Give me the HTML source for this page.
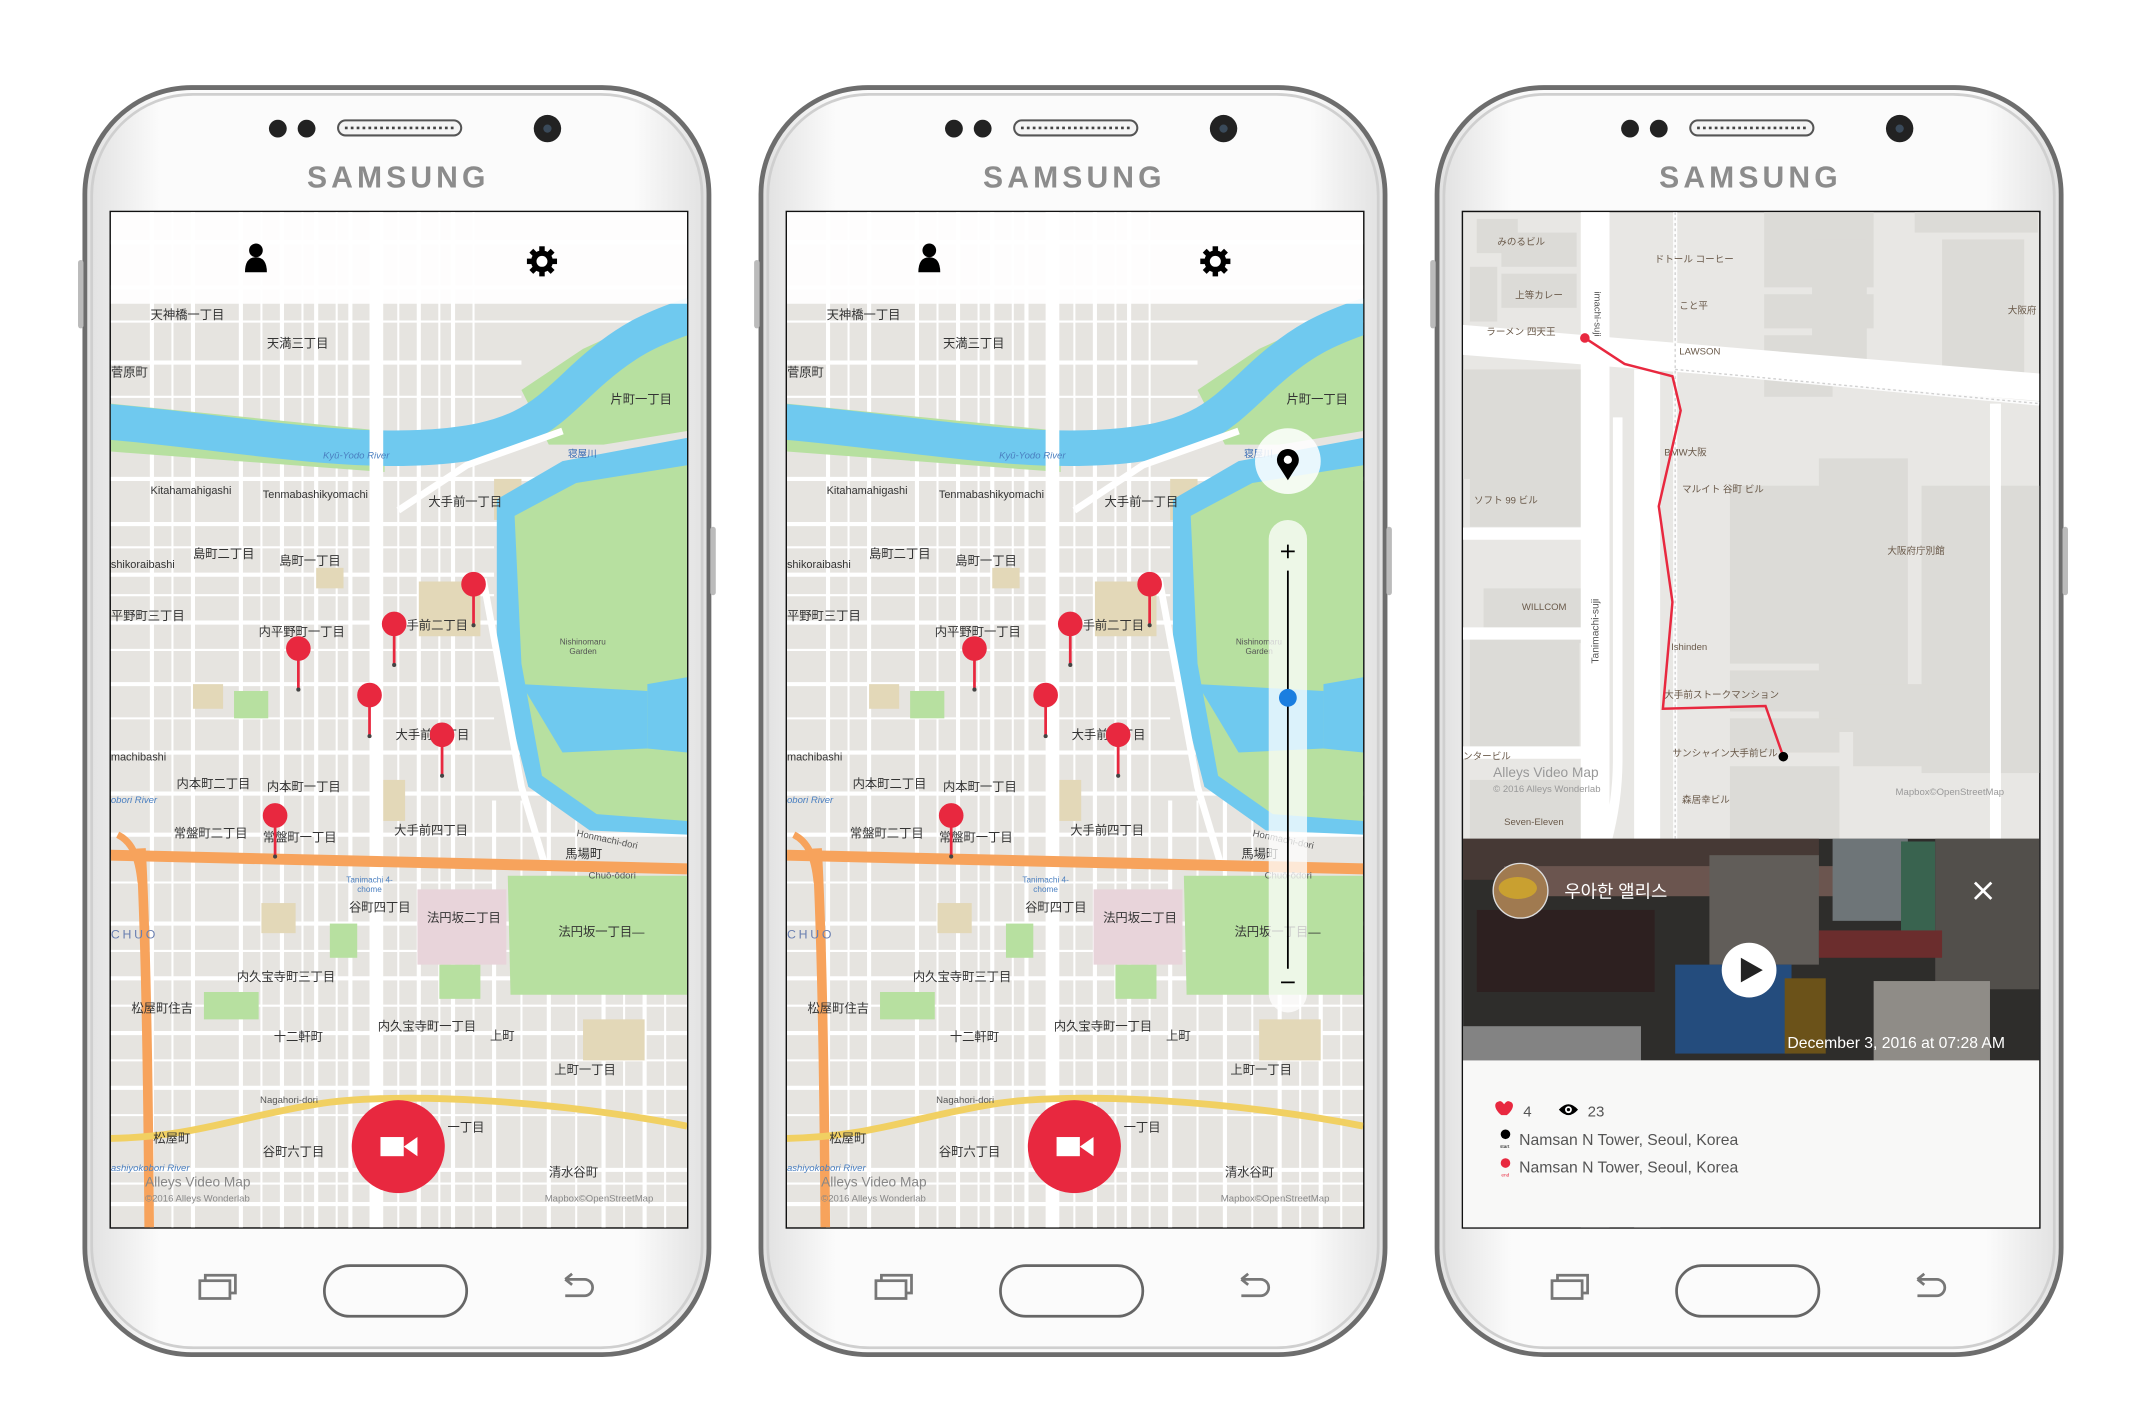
<!DOCTYPE html>
<html><head><meta charset="utf-8"><style>
html,body{margin:0;padding:0;background:#fff;width:2146px;height:1423px;overflow:hidden}
svg{display:block}
text{font-family:"Liberation Sans","Noto Sans CJK JP",sans-serif}
.l{font-size:9px;fill:#333}
</style></head><body>
<svg width="2146" height="1423" viewBox="0 0 1568 1040" preserveAspectRatio="none" xmlns="http://www.w3.org/2000/svg">
<defs>
<linearGradient id="bd" x1="0" y1="0" x2="1" y2="0">
<stop offset="0" stop-color="#e0e0e0"/><stop offset=".12" stop-color="#fbfbfb"/><stop offset=".88" stop-color="#fbfbfb"/><stop offset="1" stop-color="#e0e0e0"/></linearGradient>
<clipPath id="sc"><rect x="0" y="0" width="421" height="742"/></clipPath>
</defs>

<g>
<rect x="62" y="64" width="456" height="926" rx="78" fill="url(#bd)" stroke="#6d6d6d" stroke-width="3.5"/>
<rect x="67" y="69" width="446" height="916" rx="74" fill="none" stroke="#cfcfcf" stroke-width="2"/>
<rect x="57" y="190" width="4" height="50" rx="2" fill="#bbb"/>
<rect x="519" y="385" width="4" height="50" rx="2" fill="#bbb"/>
<circle cx="203" cy="94" r="6.5" fill="#222"/><circle cx="224" cy="94" r="6.5" fill="#222"/>
<rect x="247" y="88" width="90" height="11" rx="5.5" fill="#f4f4f4" stroke="#555" stroke-width="1.5"/>
<line x1="252" y1="93.5" x2="332" y2="93.5" stroke="#444" stroke-width="2" stroke-dasharray="2 2.3"/>
<circle cx="400" cy="94" r="10" fill="#222"/><circle cx="400" cy="94" r="3" fill="#3a4a5a"/>
<text x="291" y="137" text-anchor="middle" font-size="22" font-weight="bold" letter-spacing="3" fill="#8c8c8c">SAMSUNG</text>
<rect x="80" y="154" width="423" height="744" fill="#111"/>
<rect x="146" y="936" width="22" height="13" fill="none" stroke="#777" stroke-width="2"/>
<path d="M150 936 v-4 h22 v13 h-4" fill="none" stroke="#777" stroke-width="2"/>
<rect x="237" y="925" width="104" height="37" rx="18.5" fill="#fbfbfb" stroke="#666" stroke-width="2"/>
<path d="M413 935 h14 a6 6 0 0 1 0 12 h-14 M413 935 l5 -4 M413 935 l5 4" fill="none" stroke="#777" stroke-width="2"/>
</g>
<g transform="translate(494,0)">
<rect x="62" y="64" width="456" height="926" rx="78" fill="url(#bd)" stroke="#6d6d6d" stroke-width="3.5"/>
<rect x="67" y="69" width="446" height="916" rx="74" fill="none" stroke="#cfcfcf" stroke-width="2"/>
<rect x="57" y="190" width="4" height="50" rx="2" fill="#bbb"/>
<rect x="519" y="385" width="4" height="50" rx="2" fill="#bbb"/>
<circle cx="203" cy="94" r="6.5" fill="#222"/><circle cx="224" cy="94" r="6.5" fill="#222"/>
<rect x="247" y="88" width="90" height="11" rx="5.5" fill="#f4f4f4" stroke="#555" stroke-width="1.5"/>
<line x1="252" y1="93.5" x2="332" y2="93.5" stroke="#444" stroke-width="2" stroke-dasharray="2 2.3"/>
<circle cx="400" cy="94" r="10" fill="#222"/><circle cx="400" cy="94" r="3" fill="#3a4a5a"/>
<text x="291" y="137" text-anchor="middle" font-size="22" font-weight="bold" letter-spacing="3" fill="#8c8c8c">SAMSUNG</text>
<rect x="80" y="154" width="423" height="744" fill="#111"/>
<rect x="146" y="936" width="22" height="13" fill="none" stroke="#777" stroke-width="2"/>
<path d="M150 936 v-4 h22 v13 h-4" fill="none" stroke="#777" stroke-width="2"/>
<rect x="237" y="925" width="104" height="37" rx="18.5" fill="#fbfbfb" stroke="#666" stroke-width="2"/>
<path d="M413 935 h14 a6 6 0 0 1 0 12 h-14 M413 935 l5 -4 M413 935 l5 4" fill="none" stroke="#777" stroke-width="2"/>
</g>
<g transform="translate(988,0)">
<rect x="62" y="64" width="456" height="926" rx="78" fill="url(#bd)" stroke="#6d6d6d" stroke-width="3.5"/>
<rect x="67" y="69" width="446" height="916" rx="74" fill="none" stroke="#cfcfcf" stroke-width="2"/>
<rect x="57" y="190" width="4" height="50" rx="2" fill="#bbb"/>
<rect x="519" y="385" width="4" height="50" rx="2" fill="#bbb"/>
<circle cx="203" cy="94" r="6.5" fill="#222"/><circle cx="224" cy="94" r="6.5" fill="#222"/>
<rect x="247" y="88" width="90" height="11" rx="5.5" fill="#f4f4f4" stroke="#555" stroke-width="1.5"/>
<line x1="252" y1="93.5" x2="332" y2="93.5" stroke="#444" stroke-width="2" stroke-dasharray="2 2.3"/>
<circle cx="400" cy="94" r="10" fill="#222"/><circle cx="400" cy="94" r="3" fill="#3a4a5a"/>
<text x="291" y="137" text-anchor="middle" font-size="22" font-weight="bold" letter-spacing="3" fill="#8c8c8c">SAMSUNG</text>
<rect x="80" y="154" width="423" height="744" fill="#111"/>
<rect x="146" y="936" width="22" height="13" fill="none" stroke="#777" stroke-width="2"/>
<path d="M150 936 v-4 h22 v13 h-4" fill="none" stroke="#777" stroke-width="2"/>
<rect x="237" y="925" width="104" height="37" rx="18.5" fill="#fbfbfb" stroke="#666" stroke-width="2"/>
<path d="M413 935 h14 a6 6 0 0 1 0 12 h-14 M413 935 l5 -4 M413 935 l5 4" fill="none" stroke="#777" stroke-width="2"/>
</g>

<!-- ========== SCREEN 1 ========== -->
<g transform="translate(81,155)" clip-path="url(#sc)">
<rect width="421" height="742" fill="#e6e4e0"/>
<g stroke="#fff" stroke-width="3" fill="none">
<path d="M0 22H421M0 55H421M0 110H300M0 195H421M0 228H300M0 265H280M0 300H290M0 345H300M0 395H300M0 425H421M0 455H421M0 520H421M0 560H421M0 600H421M0 640H421M0 700H421M0 725H421"/>
<path d="M30 0V742M60 0V742M95 0V742M125 0V742M150 0V742M175 0V742M225 0V742M250 0V742M280 430V742M320 430V742M360 560V742M390 560V742"/>
</g>
<g stroke="#fff" stroke-width="1.5"><path d="M0 80H421M0 135H300M0 245H280M0 280H280M0 320H280M0 370H280M0 490H280M0 540H421M0 580H421M0 620H421M0 660H421M0 710H421M45 0V742M110 0V742M140 0V742M165 0V742M210 0V742M240 0V742M265 0V742M300 430V742M340 430V742M375 560V742M405 560V742"/></g>
<rect x="60" y="345" width="22" height="18" fill="#e3d8b8"/><rect x="150" y="260" width="20" height="15" fill="#e3d8b8"/>
<rect x="90" y="350" width="25" height="20" fill="#b7e0a0"/><rect x="90" y="170" width="30" height="12" fill="#b7e0a0"/>
<rect x="225" y="270" width="45" height="40" fill="#e3d8b8"/><rect x="280" y="195" width="20" height="30" fill="#e3d8b8"/>
<rect x="110" y="505" width="25" height="22" fill="#e3d8b8"/><rect x="195" y="415" width="20" height="30" fill="#e3d8b8"/>
<rect x="160" y="520" width="20" height="25" fill="#b7e0a0"/><rect x="68" y="570" width="40" height="20" fill="#b7e0a0"/>
<rect x="240" y="550" width="30" height="25" fill="#b7e0a0"/><rect x="345" y="590" width="45" height="30" fill="#e3d8b8"/>
<rect x="224" y="495" width="65" height="55" fill="#e8d4da"/>
<path d="M290 485H421V572H292Z" fill="#b7e0a0"/>
<path d="M0 140 L200 160 L200 190 L0 175Z" fill="#b7e0a0"/>
<path d="M300 130 L345 100 L421 65 L421 160 L360 170 L320 170Z" fill="#b7e0a0"/>
<path d="M282 210 L330 182 L421 165 L421 455 L350 452 L305 420 L282 330Z" fill="#6fc9ef"/>
<path d="M295 222 L340 198 L421 185 L421 340 L392 345 L392 392 L421 395 L421 445 L355 440 L315 412 L300 330Z" fill="#b7e0a0"/>
<path d="M300 345 L392 350 L392 392 L330 395 Z" fill="#6fc9ef"/>
<path d="M-5 153 C80 160 160 176 230 172 S315 150 345 122 S395 85 425 75" fill="none" stroke="#6fc9ef" stroke-width="26"/>
<path d="M272 268 L300 420 L318 480" fill="none" stroke="#fff" stroke-width="5"/>
<path d="M210 218 L260 185 L330 160" fill="none" stroke="#fff" stroke-width="5"/>
<rect x="189" y="0" width="10" height="742" fill="#fff"/>
<path d="M0 470 L421 480" stroke="#f7a35c" stroke-width="8" fill="none"/>
<path d="M22 465 C25 520 27 600 28 742" stroke="#f7a35c" stroke-width="7" fill="none"/>
<path d="M5 455 C15 460 20 470 22 490" stroke="#f7a35c" stroke-width="5" fill="none"/>
<path d="M0 677 C60 676 90 662 150 652 S330 650 421 668" stroke="#f1d062" stroke-width="5" fill="none"/>
<g class="l">
<text x="29" y="78">天神橋一丁目</text><text x="114" y="99">天満三丁目</text><text x="0" y="120">菅原町</text>
<text x="365" y="140">片町一丁目</text><text x="334" y="179" fill="#3a6cb5" font-size="7">寝屋川</text>
<text x="29" y="206" font-size="8">Kitahamahigashi</text><text x="111" y="209" font-size="8">Tenmabashikyomachi</text>
<text x="232" y="215">大手前一丁目</text><text x="60" y="253">島町二丁目</text><text x="123" y="258">島町一丁目</text>
<text x="0" y="260" font-size="8">shikoraibashi</text><text x="0" y="298">平野町三丁目</text><text x="108" y="310">内平野町一丁目</text>
<text x="216" y="305">手前二丁目</text><text x="208" y="385">大手前三丁目</text><text x="0" y="401" font-size="8">machibashi</text>
<text x="48" y="421">内本町二丁目</text><text x="114" y="423">内本町一丁目</text><text x="46" y="457">常盤町二丁目</text>
<text x="111" y="460">常盤町一丁目</text><text x="207" y="455">大手前四丁目</text><text x="332" y="472">馬場町</text>
<text x="174" y="511">谷町四丁目</text><text x="231" y="519">法円坂二丁目</text><text x="327" y="529">法円坂一丁目—</text>
<text x="92" y="562">内久宝寺町三丁目</text><text x="15" y="585">松屋町住吉</text><text x="119" y="606">十二軒町</text>
<text x="195" y="598">内久宝寺町一丁目</text><text x="277" y="605">上町</text><text x="324" y="630">上町一丁目</text>
<text x="31" y="680">松屋町</text><text x="111" y="690">谷町六丁目</text><text x="320" y="705">清水谷町</text><text x="246" y="672">一丁目</text>
</g>
<text x="155" y="180" font-size="7" font-style="italic" fill="#4a7fc0">Kyū-Yodo River</text>
<text x="0" y="432" font-size="7" font-style="italic" fill="#4a7fc0">obori River</text>
<text x="0" y="531" font-size="9" letter-spacing="2" fill="#6a7fb0">CHUO</text>
<text x="328" y="316" font-size="6" fill="#555">Nishinomaru</text><text x="335" y="323" font-size="6" fill="#555">Garden</text>
<text x="172" y="490" font-size="6" fill="#4a7fc0">Tanimachi 4-</text><text x="180" y="497" font-size="6" fill="#4a7fc0">chome</text>
<text x="349" y="487" font-size="7" fill="#555">Chuō-ōdori</text>
<text x="340" y="456" font-size="7" fill="#555" transform="rotate(12 340 456)">Honmachi-dori</text>
<text x="109" y="651" font-size="7" fill="#555">Nagahori-dori</text>
<text x="0" y="701" font-size="7" font-style="italic" fill="#4a7fc0">ashiyokobori River</text>
<text x="25" y="712" font-size="10" fill="#888">Alleys Video Map</text>
<text x="25" y="723" font-size="7" fill="#888">©2016 Alleys Wonderlab</text>
<text x="317" y="723" font-size="7" fill="#888">Mapbox©OpenStreetMap</text>
<g stroke="#e8283f" stroke-width="2" fill="#e8283f">
<line x1="265" y1="272" x2="265" y2="302"/><circle cx="265" cy="272" r="8"/>
<line x1="207" y1="301" x2="207" y2="331"/><circle cx="207" cy="301" r="8"/>
<line x1="137" y1="319" x2="137" y2="349"/><circle cx="137" cy="319" r="8"/>
<line x1="189" y1="353" x2="189" y2="383"/><circle cx="189" cy="353" r="8"/>
<line x1="242" y1="382" x2="242" y2="412"/><circle cx="242" cy="382" r="8"/>
<line x1="120" y1="441" x2="120" y2="471"/><circle cx="120" cy="441" r="8"/>
</g>
<g fill="#444"><circle cx="265" cy="302" r="1.5"/><circle cx="207" cy="331" r="1.5"/><circle cx="137" cy="349" r="1.5"/><circle cx="189" cy="383" r="1.5"/><circle cx="242" cy="412" r="1.5"/><circle cx="120" cy="471" r="1.5"/></g>
<rect width="421" height="67" fill="#fff" opacity=".93"/>
<circle cx="106" cy="28" r="5" fill="#000"/><path d="M98 44 Q98 33 106 33 Q114 33 114 44 Z" fill="#000"/>
<g transform="translate(315,36)"><circle r="8" fill="#000"/><g fill="#000"><rect x="-2" y="-11" width="4" height="22"/><rect x="-2" y="-11" width="4" height="22" transform="rotate(45)"/><rect x="-2" y="-11" width="4" height="22" transform="rotate(90)"/><rect x="-2" y="-11" width="4" height="22" transform="rotate(135)"/></g><circle r="4" fill="#fff"/></g>
<circle cx="210" cy="683" r="34" fill="#e8283f"/>
<rect x="197" y="676" width="17" height="14" fill="#fff"/><path d="M214 683 L224 676 V690Z" fill="#fff"/>
</g>

<!-- ========== SCREEN 2 ========== -->
<g transform="translate(575,155)" clip-path="url(#sc)">
<rect width="421" height="742" fill="#e6e4e0"/>
<g stroke="#fff" stroke-width="3" fill="none">
<path d="M0 22H421M0 55H421M0 110H300M0 195H421M0 228H300M0 265H280M0 300H290M0 345H300M0 395H300M0 425H421M0 455H421M0 520H421M0 560H421M0 600H421M0 640H421M0 700H421M0 725H421"/>
<path d="M30 0V742M60 0V742M95 0V742M125 0V742M150 0V742M175 0V742M225 0V742M250 0V742M280 430V742M320 430V742M360 560V742M390 560V742"/>
</g>
<g stroke="#fff" stroke-width="1.5"><path d="M0 80H421M0 135H300M0 245H280M0 280H280M0 320H280M0 370H280M0 490H280M0 540H421M0 580H421M0 620H421M0 660H421M0 710H421M45 0V742M110 0V742M140 0V742M165 0V742M210 0V742M240 0V742M265 0V742M300 430V742M340 430V742M375 560V742M405 560V742"/></g>
<rect x="60" y="345" width="22" height="18" fill="#e3d8b8"/><rect x="150" y="260" width="20" height="15" fill="#e3d8b8"/>
<rect x="90" y="350" width="25" height="20" fill="#b7e0a0"/><rect x="90" y="170" width="30" height="12" fill="#b7e0a0"/>
<rect x="225" y="270" width="45" height="40" fill="#e3d8b8"/><rect x="280" y="195" width="20" height="30" fill="#e3d8b8"/>
<rect x="110" y="505" width="25" height="22" fill="#e3d8b8"/><rect x="195" y="415" width="20" height="30" fill="#e3d8b8"/>
<rect x="160" y="520" width="20" height="25" fill="#b7e0a0"/><rect x="68" y="570" width="40" height="20" fill="#b7e0a0"/>
<rect x="240" y="550" width="30" height="25" fill="#b7e0a0"/><rect x="345" y="590" width="45" height="30" fill="#e3d8b8"/>
<rect x="224" y="495" width="65" height="55" fill="#e8d4da"/>
<path d="M290 485H421V572H292Z" fill="#b7e0a0"/>
<path d="M0 140 L200 160 L200 190 L0 175Z" fill="#b7e0a0"/>
<path d="M300 130 L345 100 L421 65 L421 160 L360 170 L320 170Z" fill="#b7e0a0"/>
<path d="M282 210 L330 182 L421 165 L421 455 L350 452 L305 420 L282 330Z" fill="#6fc9ef"/>
<path d="M295 222 L340 198 L421 185 L421 340 L392 345 L392 392 L421 395 L421 445 L355 440 L315 412 L300 330Z" fill="#b7e0a0"/>
<path d="M300 345 L392 350 L392 392 L330 395 Z" fill="#6fc9ef"/>
<path d="M-5 153 C80 160 160 176 230 172 S315 150 345 122 S395 85 425 75" fill="none" stroke="#6fc9ef" stroke-width="26"/>
<path d="M272 268 L300 420 L318 480" fill="none" stroke="#fff" stroke-width="5"/>
<path d="M210 218 L260 185 L330 160" fill="none" stroke="#fff" stroke-width="5"/>
<rect x="189" y="0" width="10" height="742" fill="#fff"/>
<path d="M0 470 L421 480" stroke="#f7a35c" stroke-width="8" fill="none"/>
<path d="M22 465 C25 520 27 600 28 742" stroke="#f7a35c" stroke-width="7" fill="none"/>
<path d="M5 455 C15 460 20 470 22 490" stroke="#f7a35c" stroke-width="5" fill="none"/>
<path d="M0 677 C60 676 90 662 150 652 S330 650 421 668" stroke="#f1d062" stroke-width="5" fill="none"/>
<g class="l">
<text x="29" y="78">天神橋一丁目</text><text x="114" y="99">天満三丁目</text><text x="0" y="120">菅原町</text>
<text x="365" y="140">片町一丁目</text><text x="334" y="179" fill="#3a6cb5" font-size="7">寝屋川</text>
<text x="29" y="206" font-size="8">Kitahamahigashi</text><text x="111" y="209" font-size="8">Tenmabashikyomachi</text>
<text x="232" y="215">大手前一丁目</text><text x="60" y="253">島町二丁目</text><text x="123" y="258">島町一丁目</text>
<text x="0" y="260" font-size="8">shikoraibashi</text><text x="0" y="298">平野町三丁目</text><text x="108" y="310">内平野町一丁目</text>
<text x="216" y="305">手前二丁目</text><text x="208" y="385">大手前三丁目</text><text x="0" y="401" font-size="8">machibashi</text>
<text x="48" y="421">内本町二丁目</text><text x="114" y="423">内本町一丁目</text><text x="46" y="457">常盤町二丁目</text>
<text x="111" y="460">常盤町一丁目</text><text x="207" y="455">大手前四丁目</text><text x="332" y="472">馬場町</text>
<text x="174" y="511">谷町四丁目</text><text x="231" y="519">法円坂二丁目</text><text x="327" y="529">法円坂一丁目—</text>
<text x="92" y="562">内久宝寺町三丁目</text><text x="15" y="585">松屋町住吉</text><text x="119" y="606">十二軒町</text>
<text x="195" y="598">内久宝寺町一丁目</text><text x="277" y="605">上町</text><text x="324" y="630">上町一丁目</text>
<text x="31" y="680">松屋町</text><text x="111" y="690">谷町六丁目</text><text x="320" y="705">清水谷町</text><text x="246" y="672">一丁目</text>
</g>
<text x="155" y="180" font-size="7" font-style="italic" fill="#4a7fc0">Kyū-Yodo River</text>
<text x="0" y="432" font-size="7" font-style="italic" fill="#4a7fc0">obori River</text>
<text x="0" y="531" font-size="9" letter-spacing="2" fill="#6a7fb0">CHUO</text>
<text x="328" y="316" font-size="6" fill="#555">Nishinomaru</text><text x="335" y="323" font-size="6" fill="#555">Garden</text>
<text x="172" y="490" font-size="6" fill="#4a7fc0">Tanimachi 4-</text><text x="180" y="497" font-size="6" fill="#4a7fc0">chome</text>
<text x="349" y="487" font-size="7" fill="#555">Chuō-ōdori</text>
<text x="340" y="456" font-size="7" fill="#555" transform="rotate(12 340 456)">Honmachi-dori</text>
<text x="109" y="651" font-size="7" fill="#555">Nagahori-dori</text>
<text x="0" y="701" font-size="7" font-style="italic" fill="#4a7fc0">ashiyokobori River</text>
<text x="25" y="712" font-size="10" fill="#888">Alleys Video Map</text>
<text x="25" y="723" font-size="7" fill="#888">©2016 Alleys Wonderlab</text>
<text x="317" y="723" font-size="7" fill="#888">Mapbox©OpenStreetMap</text>
<g stroke="#e8283f" stroke-width="2" fill="#e8283f">
<line x1="265" y1="272" x2="265" y2="302"/><circle cx="265" cy="272" r="8"/>
<line x1="207" y1="301" x2="207" y2="331"/><circle cx="207" cy="301" r="8"/>
<line x1="137" y1="319" x2="137" y2="349"/><circle cx="137" cy="319" r="8"/>
<line x1="189" y1="353" x2="189" y2="383"/><circle cx="189" cy="353" r="8"/>
<line x1="242" y1="382" x2="242" y2="412"/><circle cx="242" cy="382" r="8"/>
<line x1="120" y1="441" x2="120" y2="471"/><circle cx="120" cy="441" r="8"/>
</g>
<g fill="#444"><circle cx="265" cy="302" r="1.5"/><circle cx="207" cy="331" r="1.5"/><circle cx="137" cy="349" r="1.5"/><circle cx="189" cy="383" r="1.5"/><circle cx="242" cy="412" r="1.5"/><circle cx="120" cy="471" r="1.5"/></g>
<rect width="421" height="67" fill="#fff" opacity=".93"/>
<circle cx="104" cy="28" r="5" fill="#000"/><path d="M96 44 Q96 33 104 33 Q112 33 112 44 Z" fill="#000"/>
<g transform="translate(313,36)"><circle r="8" fill="#000"/><g fill="#000"><rect x="-2" y="-11" width="4" height="22"/><rect x="-2" y="-11" width="4" height="22" transform="rotate(45)"/><rect x="-2" y="-11" width="4" height="22" transform="rotate(90)"/><rect x="-2" y="-11" width="4" height="22" transform="rotate(135)"/></g><circle r="4" fill="#fff"/></g>
<circle cx="366" cy="182" r="24" fill="#fff" opacity=".85"/>
<path d="M366 196 L359 185 A8 8 0 1 1 373 185 Z" fill="#000"/><circle cx="366" cy="181" r="3" fill="#fff"/>
<rect x="352" y="225" width="28" height="360" rx="14" fill="#fff" opacity=".75"/>
<path d="M361 248 H371 M366 243 V253" stroke="#000" stroke-width="1.3"/>
<line x1="366" y1="262" x2="366" y2="553" stroke="#000" stroke-width="1.3"/>
<line x1="361" y1="563" x2="371" y2="563" stroke="#000" stroke-width="1.3"/>
<circle cx="366" cy="355" r="6.5" fill="#1a7ee0"/>
<circle cx="210" cy="683" r="34" fill="#e8283f"/>
<rect x="197" y="676" width="17" height="14" fill="#fff"/><path d="M214 683 L224 676 V690Z" fill="#fff"/>
</g>

<!-- ========== SCREEN 3 ========== -->
<g transform="translate(1069,155)" clip-path="url(#sc)">
<rect width="421" height="742" fill="#e8e7e4"/>
<g fill="#dcdbd7">
<rect x="10" y="5" width="30" height="25"/><rect x="28" y="15" width="55" height="25"/><rect x="5" y="40" width="20" height="40"/><rect x="28" y="45" width="55" height="25"/>
<rect x="220" y="0" width="80" height="55"/><rect x="220" y="60" width="80" height="25"/><rect x="220" y="90" width="50" height="45"/><rect x="255" y="20" width="40" height="100"/>
<rect x="350" y="20" width="60" height="100"/><rect x="330" y="0" width="90" height="15"/>
<rect x="0" y="115" width="90" height="80"/><rect x="5" y="170" width="85" height="60"/>
<rect x="195" y="200" width="75" height="130"/><rect x="260" y="180" width="65" height="200"/><rect x="335" y="200" width="130" height="210"/>
<rect x="15" y="275" width="80" height="40"/><rect x="5" y="310" width="80" height="85"/>
<rect x="195" y="335" width="80" height="30"/><rect x="195" y="370" width="80" height="25"/><rect x="285" y="345" width="55" height="60"/>
<rect x="195" y="405" width="80" height="55"/><rect x="5" y="415" width="85" height="45"/>
</g>
<path d="M-5 82 L421 118 L421 138 L-5 104Z" fill="#fff"/>
<rect x="86" y="0" width="21" height="742" fill="#fff"/>
<rect x="125" y="115" width="19" height="630" fill="#fff"/>
<path d="M113 150 V400 Q113 430 105 460" stroke="#fff" stroke-width="7" fill="none"/>
<path d="M-5 235 H90 M-5 308 H90 M-5 395 H90" stroke="#fff" stroke-width="9"/>
<path d="M155 0 V460 M155 115 L421 140" stroke="#fff" stroke-width="3" opacity=".9"/>
<path d="M155 115 L421 140" stroke="#d0d0d0" stroke-width="1" stroke-dasharray="2 2"/>
<path d="M155 0 V460" stroke="#d0d0d0" stroke-width="1" stroke-dasharray="2 2"/>
<rect x="385" y="140" width="8" height="320" fill="#fff"/>
<g font-size="7" fill="#6a5a4a">
<text x="25" y="24">みのるビル</text><text x="38" y="63">上等カレー</text><text x="17" y="90">ラーメン 四天王</text>
<text x="140" y="37">ドトール コーヒー</text><text x="158" y="71">こと平</text><text x="158" y="104">LAWSON</text>
<text x="398" y="74">大阪府</text><text x="147" y="178">BMW大阪</text><text x="160" y="205">マルイト 谷町 ビル</text>
<text x="310" y="250">大阪府庁別館</text><text x="8" y="213">ソフト 99 ビル</text><text x="43" y="291">WILLCOM</text>
<text x="152" y="320">Ishinden</text><text x="147" y="355">大手前ストークマンション</text><text x="153" y="398">サンシャイン大手前ビル</text>
<text x="0" y="400">ンタービル</text><text x="160" y="432">森居幸ビル</text><text x="30" y="448">Seven-Eleven</text>
</g>
<text x="96" y="58" font-size="7" fill="#555" transform="rotate(90 96 58)">imachi-suji</text>
<text x="99" y="330" font-size="7.5" fill="#555" transform="rotate(-90 99 330)">Tanimachi-suji</text>
<text x="22" y="413" font-size="10" fill="#999">Alleys Video Map</text>
<text x="22" y="424" font-size="7" fill="#999">© 2016 Alleys Wonderlab</text>
<text x="316" y="426" font-size="7" fill="#999">Mapbox©OpenStreetMap</text>
<path d="M89 92 L118 111 L153 120 L159 145 L143 215 L153 285 L146 363 L221 361 L234 398" fill="none" stroke="#e8283f" stroke-width="1.8"/>
<circle cx="89" cy="92" r="3.5" fill="#e8283f"/><circle cx="234" cy="398" r="3.5" fill="#000"/>
<rect x="0" y="458" width="421" height="162" fill="#3c3a38"/>
<rect x="0" y="458" width="260" height="30" fill="#5a4a44"/>
<rect x="30" y="478" width="250" height="22" fill="#8a6e66"/>
<rect x="270" y="458" width="55" height="60" fill="#8e979a"/>
<rect x="320" y="460" width="25" height="80" fill="#4a7f66"/>
<rect x="345" y="458" width="76" height="110" fill="#6a6660"/>
<rect x="180" y="470" width="80" height="80" fill="#7d7872"/>
<rect x="10" y="510" width="130" height="60" fill="#3a2a2a"/>
<rect x="155" y="550" width="85" height="65" fill="#2f62a0"/>
<rect x="235" y="560" width="30" height="55" fill="#8a6a20"/>
<rect x="300" y="562" width="85" height="58" fill="#b8b4ae"/>
<rect x="0" y="595" width="130" height="25" fill="#a8a8a8"/>
<rect x="260" y="525" width="90" height="20" fill="#8a3a3a"/>
<rect x="0" y="458" width="421" height="162" fill="#000" opacity=".22"/>
<circle cx="42" cy="496" r="20" fill="#a07a50" stroke="#ddd" stroke-width="1"/>
<ellipse cx="40" cy="494" rx="14" ry="8" fill="#c9a030"/>
<text x="74" y="501" font-size="13" fill="#fff" font-family="'Liberation Sans','Noto Sans CJK KR',sans-serif">우아한 앨리스</text>
<path d="M374 490 L386 502 M386 490 L374 502" stroke="#fff" stroke-width="2"/>
<circle cx="209" cy="554" r="20" fill="#fff"/><path d="M203 545 L219 554 L203 563Z" fill="#222"/>
<text x="396" y="611" font-size="11.5" fill="#fff" text-anchor="end">December 3, 2016 at 07:28 AM</text>
<rect x="0" y="620" width="421" height="122" fill="#f8f8f7"/>
<path d="M30 660 C25 656 24 651 28 650 C30 649 31 651 32 652 C33 651 34 649 36 650 C40 651 39 656 34 660 Z" transform="translate(-2,0)" fill="#e8283f"/>
<text x="44" y="661" font-size="11" fill="#555">4</text>
<path d="M70 656 Q77 648 84 656 Q77 664 70 656Z" fill="#000"/><circle cx="77" cy="656" r="2.5" fill="#fff"/><circle cx="77" cy="656" r="1.2" fill="#000"/>
<text x="91" y="661" font-size="11" fill="#555">23</text>
<circle cx="31" cy="674" r="3.5" fill="#000"/><text x="27" y="684" font-size="3.5" fill="#000">start</text>
<text x="41" y="682" font-size="11.5" fill="#555">Namsan N Tower, Seoul, Korea</text>
<circle cx="31" cy="695" r="3.5" fill="#e8283f"/><text x="28" y="705" font-size="3.5" fill="#e8283f">end</text>
<text x="41" y="702" font-size="11.5" fill="#555">Namsan N Tower, Seoul, Korea</text>
</g>
</svg>
</body></html>
